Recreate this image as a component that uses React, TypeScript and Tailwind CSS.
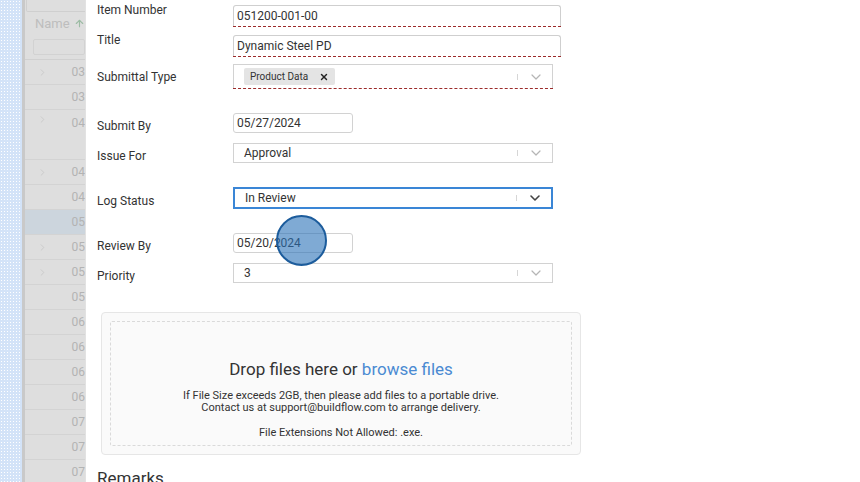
import { ChevronDown, ChevronRight, X, ArrowUp } from 'lucide-react';

const gridRows = [
  { id: '03', h: 'h-[25px]', chevron: true },
  { id: '03', h: 'h-[25px]' },
  { id: '04', h: 'h-[50px]', chevron: true, top: true },
  { id: '04', h: 'h-[25px]', chevron: true },
  { id: '04', h: 'h-[25px]' },
  { id: '05', h: 'h-[25px]', active: true },
  { id: '05', h: 'h-[25px]', chevron: true },
  { id: '05', h: 'h-[25px]', chevron: true },
  { id: '05', h: 'h-[25px]' },
  { id: '06', h: 'h-[25px]' },
  { id: '06', h: 'h-[25px]' },
  { id: '06', h: 'h-[25px]' },
  { id: '06', h: 'h-[25px]' },
  { id: '07', h: 'h-[25px]' },
  { id: '07', h: 'h-[25px]' },
  { id: '07', h: 'h-[25px]' },
];

function GridBehind() {
  return (
    <div className="w-[60px] shrink-0 bg-[#dedede] text-[12px] text-[#b3b3b3] overflow-hidden">
      <div className="h-[12px] border-b border-x border-[#cfcfcf] ml-[1px] mr-[-4px] rounded-b-[2px]" />
      <div className="h-[23px] flex items-center pl-[10px] gap-[4px] text-[13px] text-[#bdbdbd]">
        Name <ArrowUp className="w-[11px] h-[11px] text-[#9cbca4]" strokeWidth={2.5} />
      </div>
      <div className="h-[25px] border-b border-[#d0d0d0] flex items-center pl-[8px]">
        <div className="h-[16px] w-full border border-[#d2d2d2] rounded-[2px]" />
      </div>
      {gridRows.map((r, i) => (
        <div
          key={i}
          className={`${r.h} border-b border-[#d3d3d3] flex ${r.top ? 'items-start pt-[4px]' : 'items-center'} ${r.active ? 'bg-[#ccd5dd]' : ''}`}
        >
          <div className="w-[47px] pl-[12px]">
            {r.chevron && <ChevronRight className="w-[11px] h-[11px] text-[#c2c2c2]" strokeWidth={1.5} />}
          </div>
          <span className="whitespace-nowrap">{r.id}</span>
        </div>
      ))}
    </div>
  );
}

function Label({ text, mt }: { text: string; mt: string }) {
  return <div className={`w-[136px] shrink-0 text-[12px] leading-[16px] text-[#333] ${mt}`}>{text}</div>;
}

function RequiredInput({ value }: { value: string }) {
  return (
    <div className="w-[328px] mt-[3px]">
      <div className="h-[21px] border-x border-t border-[#cfcfcf] rounded-t-[3px] flex items-center px-[3px] text-[12px] text-[#333]">
        {value}
      </div>
      <div className="border-t border-dashed border-[#9b2b2b]" />
    </div>
  );
}

function SelectArrow({ dark }: { dark?: boolean }) {
  return (
    <div className="ml-auto flex items-center gap-[10px] pr-[8px]">
      <div className="w-px h-[6px] bg-[#d6d6d6]" />
      <ChevronDown
        className={`w-[16px] h-[16px] ${dark ? 'text-[#444]' : 'text-[#b5b5b5]'}`}
        strokeWidth={dark ? 2.4 : 1.8}
      />
    </div>
  );
}

function Select({ value, focused }: { value: string; focused?: boolean }) {
  return (
    <div
      className={`w-[320px] flex items-center text-[12px] text-[#333] pl-[10px] ${
        focused ? 'h-[22px] border-2 border-[#3a86d6]' : 'h-[20px] border border-[#d2d2d2]'
      }`}
    >
      {value}
      <SelectArrow dark={focused} />
    </div>
  );
}

function DateInput({ value }: { value: string }) {
  return (
    <div className="w-[120px] h-[20px] border border-[#d2d2d2] rounded-[3px] flex items-center px-[3px] text-[12px] text-[#333]">
      {value}
    </div>
  );
}

export default function App() {
  return (
    <div className="relative w-[860px] h-[482px] overflow-hidden flex bg-white" style={{ fontFamily: 'Roboto, "Liberation Sans", sans-serif' }}>
      <div className="w-[22px] shrink-0 bg-[#d3e3f8] bg-[radial-gradient(#ffffff_0.8px,transparent_0.8px)] bg-[length:3px_3px]" />
      <div className="w-[3px] shrink-0 bg-[#c9c9c9]" />
      <GridBehind />

      <div className="flex-1 bg-white border-l border-[#e2e2e2] pl-[11px] pt-[2px]">
        <div className="flex h-[25px]">
          <Label text="Item Number" mt="mt-0" />
          <RequiredInput value="051200-001-00" />
        </div>
        <div className="flex h-[25px] mt-[5px]">
          <Label text="Title" mt="mt-0" />
          <RequiredInput value="Dynamic Steel PD" />
        </div>
        <div className="flex h-[25px] mt-[7px]">
          <Label text="Submittal Type" mt="mt-[5px]" />
          <div className="w-[320px]">
            <div className="h-[24px] border-x border-t border-[#d2d2d2] flex items-center pl-[10px]">
              <span className="h-[17px] bg-[#e4e4e4] rounded-[2px] flex items-center gap-[11px] pl-[6px] pr-[6px] text-[10px] text-[#333]">
                Product Data
                <X className="w-[10px] h-[10px] text-[#222]" strokeWidth={3.5} />
              </span>
              <SelectArrow />
            </div>
            <div className="border-t border-dashed border-[#9b2b2b]" />
          </div>
        </div>
        <div className="flex h-[20px] mt-[24px]">
          <Label text="Submit By" mt="mt-[5px]" />
          <DateInput value="05/27/2024" />
        </div>
        <div className="flex h-[20px] mt-[10px]">
          <Label text="Issue For" mt="mt-[5px]" />
          <Select value="Approval" />
        </div>
        <div className="flex h-[22px] mt-[24px]">
          <Label text="Log Status" mt="mt-[6px]" />
          <Select value="In Review" focused />
        </div>
        <div className="flex h-[20px] mt-[24px]">
          <Label text="Review By" mt="mt-[5px]" />
          <DateInput value="05/20/2024" />
        </div>
        <div className="flex h-[20px] mt-[10px]">
          <Label text="Priority" mt="mt-[5px]" />
          <Select value="3" />
        </div>

        <div className="ml-[4px] mt-[29px] w-[480px] h-[143px] border border-[#e6e6e6] rounded-[4px] bg-[#fafafa] p-[8px]">
          <div className="h-full border border-dashed border-[#dadada] rounded-[2px] flex flex-col items-center pt-[36px] text-[#333]">
            <div className="text-[17px] leading-[22px]">
              Drop files here or <span className="text-[#4a8ad2]">browse files</span>
            </div>
            <div className="mt-[10px] text-[11px] leading-[12px] text-center">
              <div>If File Size exceeds 2GB, then please add files to a portable drive.</div>
              <div>Contact us at support@buildflow.com to arrange delivery.</div>
              <div className="mt-[13px]">File Extensions Not Allowed: .exe.</div>
            </div>
          </div>
        </div>

        <div className="mt-[12px] text-[17px] leading-[22px] text-[#333]">Remarks</div>
      </div>

      <div className="absolute left-[276px] top-[215px] w-[51px] h-[51px] rounded-full bg-[#2a72b8]/60 border-2 border-[#1c5c9c]" />
    </div>
  );
}
